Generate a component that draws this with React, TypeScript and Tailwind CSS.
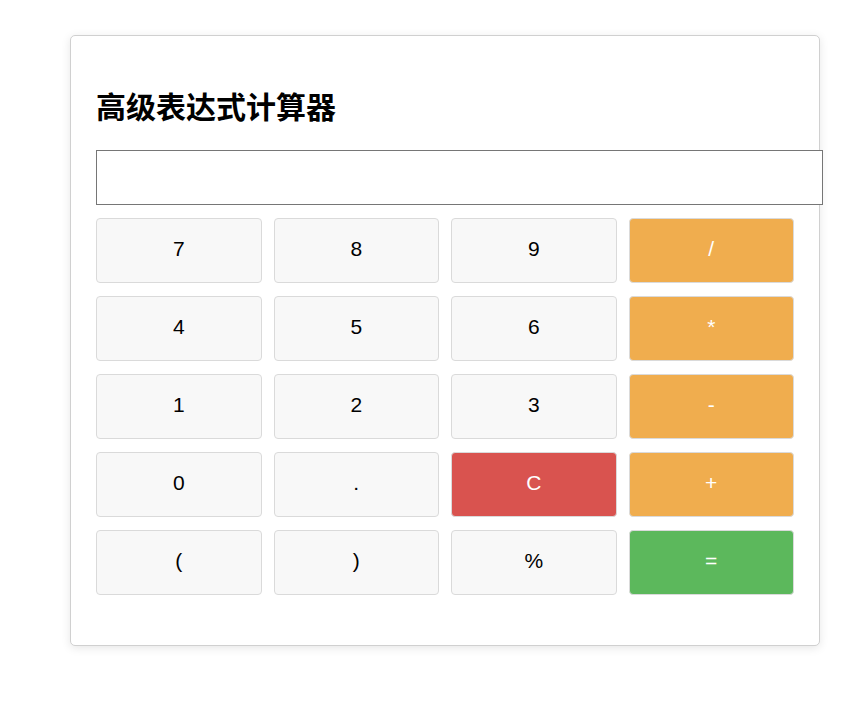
const keys: { label: string; kind: 'num' | 'op' | 'clear' | 'eq' }[] = [
  { label: '7', kind: 'num' },
  { label: '8', kind: 'num' },
  { label: '9', kind: 'num' },
  { label: '/', kind: 'op' },
  { label: '4', kind: 'num' },
  { label: '5', kind: 'num' },
  { label: '6', kind: 'num' },
  { label: '*', kind: 'op' },
  { label: '1', kind: 'num' },
  { label: '2', kind: 'num' },
  { label: '3', kind: 'num' },
  { label: '-', kind: 'op' },
  { label: '0', kind: 'num' },
  { label: '.', kind: 'num' },
  { label: 'C', kind: 'clear' },
  { label: '+', kind: 'op' },
  { label: '(', kind: 'num' },
  { label: ')', kind: 'num' },
  { label: '%', kind: 'num' },
  { label: '=', kind: 'eq' },
];

const kindClass = {
  num: 'bg-[#f8f8f8] text-black',
  op: 'bg-[#f0ad4e] text-white',
  clear: 'bg-[#d9534f] text-white',
  eq: 'bg-[#5cb85c] text-white',
};

export default function App() {
  return (
    <div className="min-h-[711px] bg-white pt-[35px] pl-[70px] font-['Liberation_Sans','Noto_Sans_CJK_SC',sans-serif]">
      <div className="w-[750px] rounded-[5px] border border-[#d0d0d0] bg-white px-[25px] pt-[54px] pb-[50px] shadow-[0_2px_10px_rgba(0,0,0,0.1)]">
        <h2 className="text-[30px] font-bold leading-[36px] text-black">高级表达式计算器</h2>
        <input
          type="text"
          className="mt-[24px] block h-[55px] w-[727px] border border-[#767676] bg-white px-[14px] text-[20px] outline-none"
        />
        <div className="mt-[13px] grid grid-cols-4 gap-x-[12px] gap-y-[13px]">
          {keys.map((k) => (
            <button
              key={k.label}
              className={`flex h-[65px] items-center justify-center rounded-[4px] border border-[#dadada] pb-[3px] text-[21px] ${kindClass[k.kind]}`}
            >
              {k.label}
            </button>
          ))}
        </div>
      </div>
    </div>
  );
}
